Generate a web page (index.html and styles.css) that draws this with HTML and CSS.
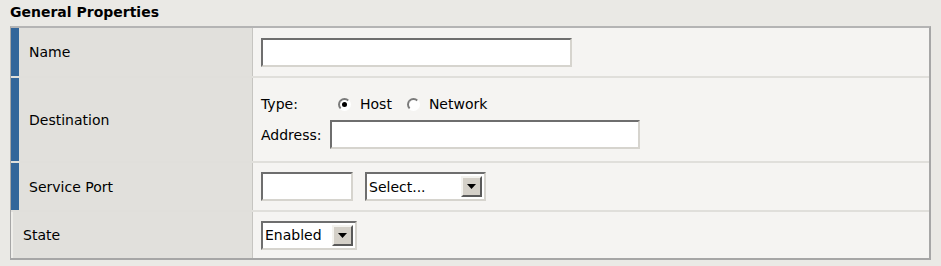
FILE: index.html
```html
<!DOCTYPE html>
<html lang="en">
<head>
    <meta charset="UTF-8">
    <title>General Properties</title>
    <link rel="stylesheet" href="styles.css">
</head>
<body>
    <!-- Section title -->
    <h2 class="section-title">General Properties</h2>

    <!-- Property table -->
    <div class="props">
        <div class="row row-name">
            <div class="label required">Name</div>
            <div class="value">
                <input type="text" class="field field-name">
            </div>
        </div>

        <div class="row row-dest">
            <div class="label required">Destination</div>
            <div class="value value-stack">
                <div class="type-line">
                    <span class="type-label">Type:</span>
                    <span class="radio checked"></span>
                    <span class="radio-text">Host</span>
                    <span class="radio"></span>
                    <span class="radio-text">Network</span>
                </div>
                <div class="address-line">
                    <span class="address-label">Address:</span>
                    <input type="text" class="field field-address">
                </div>
            </div>
        </div>

        <div class="row row-port">
            <div class="label required">Service Port</div>
            <div class="value">
                <input type="text" class="field field-port">
                <div class="combo combo-service">
                    <span class="combo-text">Select...</span>
                    <span class="combo-btn">
                        <svg width="9" height="5" viewBox="0 0 9 5"><polygon points="0,0 9,0 4.5,5" fill="#000"/></svg>
                    </span>
                </div>
            </div>
        </div>

        <div class="row row-state">
            <div class="label">State</div>
            <div class="value">
                <div class="combo combo-state">
                    <span class="combo-text">Enabled</span>
                    <span class="combo-btn">
                        <svg width="9" height="5" viewBox="0 0 9 5"><polygon points="0,0 9,0 4.5,5" fill="#000"/></svg>
                    </span>
                </div>
            </div>
        </div>
    </div>
</body>
</html>
```

FILE: styles.css
```css
/* Page */
body {
    margin: 0;
    padding: 0 10px;
    background: #eae9e5;
    font-family: "DejaVu Sans", Verdana, sans-serif;
    font-size: 14px;
    color: #000;
}

.section-title {
    margin: 0;
    padding-top: 5px;
    height: 21px;
    font-size: 14px;
    font-weight: bold;
    line-height: 15px;
}

/* Table */
.props {
    border: 2px solid #a6a6a6;
    border-top-color: #b4b4b4;
    border-left-width: 1px;
    background: #f5f4f2;
}

.row {
    display: flex;
    border-bottom: 2px solid #e0dfdb;
}

.row:last-child {
    border-bottom: none;
}

.row-name { height: 48px; }
.row-dest { height: 83px; }
.row-port { height: 47px; }
.row-state { height: 46px; }

.label {
    width: 242px;
    box-sizing: border-box;
    display: flex;
    align-items: center;
    padding-left: 10px;
    background: #e1e0dc;
    border-right: 1px solid #c6c5c1;
    border-left: 2px solid #efeeea;
}

.label.required {
    border-left: 8px solid #33669a;
}

.value {
    flex: 1;
    display: flex;
    align-items: center;
    gap: 12px;
    padding-left: 8px;
}

.value-stack {
    flex-direction: column;
    align-items: flex-start;
    justify-content: center;
    gap: 6px;
    padding-top: 4px;
}

/* Inputs */
.field {
    box-sizing: border-box;
    height: 29px;
    margin: 0;
    padding: 0 4px;
    border: 2px solid;
    border-color: #6e6e6e #d6d4ce #d6d4ce #6e6e6e;
    background: #fff;
    font: inherit;
    outline: none;
}

.field-name { width: 311px; }
.field-address { width: 310px; }
.field-port { width: 92px; }

/* Radio line */
.type-line {
    display: flex;
    align-items: center;
    height: 20px;
}

.type-label {
    width: 77px;
}

.radio {
    box-sizing: border-box;
    width: 13px;
    height: 13px;
    border-radius: 50%;
    border: 2px solid;
    border-color: #7a7a7a #ffffff #ffffff #7a7a7a;
    background: #fff;
    display: flex;
    align-items: center;
    justify-content: center;
    margin-right: 9px;
}

.radio.checked::after {
    content: '';
    width: 5px;
    height: 5px;
    border-radius: 50%;
    background: #000;
}

.radio-text {
    margin-right: 15px;
}

.address-line {
    display: flex;
    align-items: center;
}

.address-label {
    width: 69px;
}

/* Combo boxes */
.combo {
    box-sizing: border-box;
    height: 29px;
    display: flex;
    align-items: center;
    border: 2px solid;
    border-color: #6e6e6e #d6d4ce #d6d4ce #6e6e6e;
    background: #fff;
}

.combo-service { width: 121px; }
.combo-state { width: 96px; }

.combo-text {
    flex: 1;
    padding-left: 2px;
}

.combo-btn {
    box-sizing: border-box;
    width: 21px;
    height: 21px;
    margin-right: 2px;
    display: flex;
    align-items: center;
    justify-content: center;
    background: #d4d0c8;
    border: 2px solid;
    border-color: #f4f3ef #5a5a5a #5a5a5a #f4f3ef;
}
```
